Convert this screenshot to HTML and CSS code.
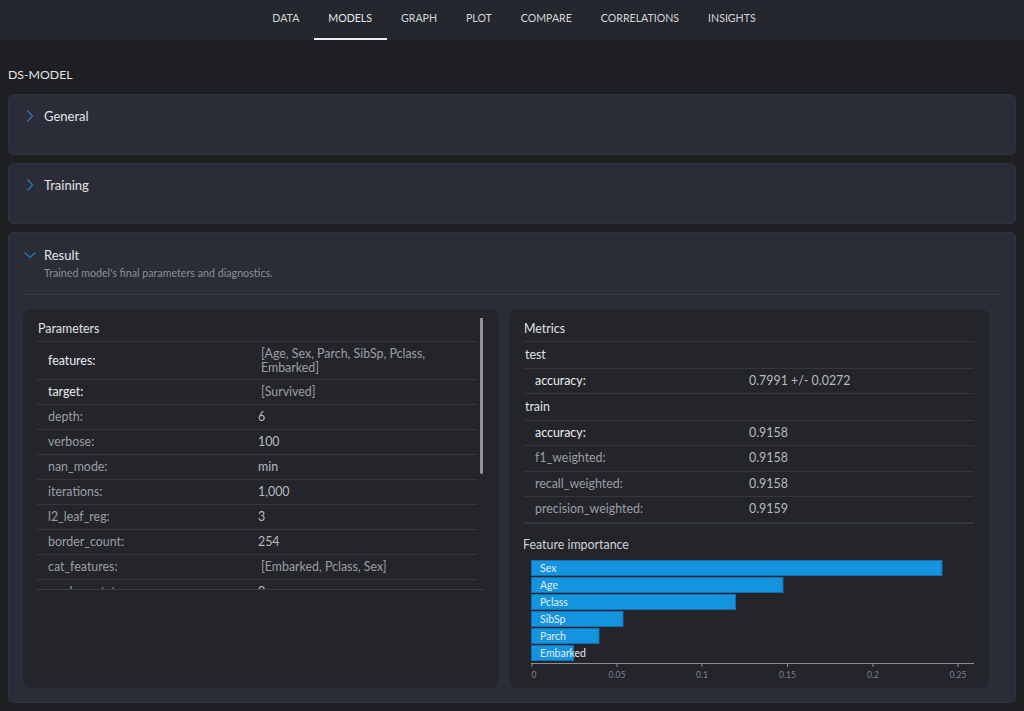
FILE: index.html
```html
<!DOCTYPE html>
<html>
<head>
<meta charset="utf-8">
<title>DS-MODEL</title>
<link rel="stylesheet" href="styles.css">
</head>
<body>
<nav class="topnav">
  <a class="tab">DATA</a>
  <a class="tab active">MODELS</a>
  <a class="tab">GRAPH</a>
  <a class="tab">PLOT</a>
  <a class="tab">COMPARE</a>
  <a class="tab">CORRELATIONS</a>
  <a class="tab">INSIGHTS</a>
</nav>
<main class="page">
  <h1 class="page-title">DS-MODEL</h1>

  <section class="card collapsed">
    <div class="card-head">
      <svg class="chev" width="12" height="12" viewBox="0 0 12 12"><path d="M3.5 0.5 L8.5 6 L3.5 11.5" fill="none" stroke="#2a79b8" stroke-width="1.2"/></svg>
      <span class="card-title">General</span>
    </div>
  </section>

  <section class="card collapsed">
    <div class="card-head">
      <svg class="chev" width="12" height="12" viewBox="0 0 12 12"><path d="M3.5 0.5 L8.5 6 L3.5 11.5" fill="none" stroke="#2a79b8" stroke-width="1.2"/></svg>
      <span class="card-title">Training</span>
    </div>
  </section>

  <section class="card open">
    <div class="card-head">
      <svg class="chev" width="12" height="12" viewBox="0 0 12 12"><path d="M0.5 3.5 L6 8.5 L11.5 3.5" fill="none" stroke="#2a79b8" stroke-width="1.2"/></svg>
      <span class="card-title">Result</span>
    </div>
    <p class="card-sub">Trained model's final parameters and diagnostics.</p>
    <div class="divider"></div>
    <div class="panels">
      <div class="panel">
        <div class="scroll">
          <div class="panel-title">Parameters</div>
          <table class="kv params">
            <tr class="hi first"><td class="k">features:</td><td class="v list">[Age, Sex, Parch, SibSp, Pclass, Embarked]</td></tr>
            <tr class="hi"><td class="k">target:</td><td class="v list">[Survived]</td></tr>
            <tr><td class="k">depth:</td><td class="v">6</td></tr>
            <tr><td class="k">verbose:</td><td class="v">100</td></tr>
            <tr><td class="k">nan_mode:</td><td class="v">min</td></tr>
            <tr><td class="k">iterations:</td><td class="v">1,000</td></tr>
            <tr><td class="k">l2_leaf_reg:</td><td class="v">3</td></tr>
            <tr><td class="k">border_count:</td><td class="v">254</td></tr>
            <tr><td class="k">cat_features:</td><td class="v list">[Embarked, Pclass, Sex]</td></tr>
            <tr><td class="k">random_state:</td><td class="v">0</td></tr>
          </table>
          <div class="thumb"></div>
        </div>
      </div>

      <div class="panel metrics">
        <div class="panel-title">Metrics</div>
        <table class="kv mtable">
          <tr class="grp"><td colspan="2">test</td></tr>
          <tr class="hi"><td class="k">accuracy:</td><td class="v">0.7991 +/- 0.0272</td></tr>
          <tr class="grp"><td colspan="2">train</td></tr>
          <tr class="hi"><td class="k">accuracy:</td><td class="v">0.9158</td></tr>
          <tr><td class="k">f1_weighted:</td><td class="v">0.9158</td></tr>
          <tr><td class="k">recall_weighted:</td><td class="v">0.9158</td></tr>
          <tr class="last"><td class="k">precision_weighted:</td><td class="v">0.9159</td></tr>
        </table>
        <div class="fi-title">Feature importance</div>
        <svg class="chart" width="450" height="128" viewBox="0 0 450 128">
          <g class="bars">
            <rect x="7.5" y="6.5" width="410.5" height="15"/>
            <rect x="7.5" y="23.5" width="251.5" height="15"/>
            <rect x="7.5" y="40.5" width="204" height="15"/>
            <rect x="7.5" y="57.5" width="91.5" height="15"/>
            <rect x="7.5" y="74.5" width="67.5" height="15"/>
            <rect x="7.5" y="91.5" width="42" height="15"/>
          </g>
          <g class="blabels">
            <text x="16" y="17.5">Sex</text>
            <text x="16" y="34.5">Age</text>
            <text x="16" y="51.5">Pclass</text>
            <text x="16" y="68.5">SibSp</text>
            <text x="16" y="85.5">Parch</text>
            <text x="16" y="102.5">Embarked</text>
          </g>
          <g class="axis">
            <line x1="7" y1="109.5" x2="450" y2="109.5"/>
            <line x1="8" y1="109.5" x2="8" y2="113"/>
            <line x1="93" y1="109.5" x2="93" y2="113"/>
            <line x1="178" y1="109.5" x2="178" y2="113"/>
            <line x1="263.5" y1="109.5" x2="263.5" y2="113"/>
            <line x1="349" y1="109.5" x2="349" y2="113"/>
            <line x1="434" y1="109.5" x2="434" y2="113"/>
          </g>
          <g class="ticks">
            <text x="10" y="124">0</text>
            <text x="93" y="124">0.05</text>
            <text x="178" y="124">0.1</text>
            <text x="263.5" y="124">0.15</text>
            <text x="349" y="124">0.2</text>
            <text x="434" y="124">0.25</text>
          </g>
        </svg>
      </div>
    </div>
  </section>
</main>
</body>
</html>
```

FILE: styles.css
```css
* { box-sizing: border-box; }
html, body {
  margin: 0;
  padding: 0;
  background: #1e1f23;
  color: #d6d7da;
  font-family: Lato, "Open Sans", "Liberation Sans", sans-serif;
  height: 711px;
  overflow: hidden;
}

.topnav {
  height: 40px;
  background: #24272e;
  display: flex;
  justify-content: center;
  align-items: stretch;
  padding-left: 4px;
}
.tab {
  display: flex;
  align-items: center;
  padding: 0 14.5px 2px;
  font-size: 10.6px;
  color: #d4d5d8;
  border-bottom: 2px solid transparent;
  cursor: pointer;
}
.tab.active {
  color: #e8e9eb;
  border-bottom-color: #eeeeee;
}

.page { padding: 0 8px; }
.page-title {
  margin: 27px 0 11px;
  font-size: 12.3px;
  line-height: 16px;
  font-weight: 400;
  color: #e2e3e5;
}

.card {
  background: #2a2d37;
  border: 1px solid #30333d;
  border-radius: 6px;
  padding: 0 15px;
  margin-bottom: 8px;
}
.card.collapsed { height: 61px; }
.card-head {
  display: flex;
  align-items: center;
  gap: 8px;
  padding-top: 13px;
  height: 29px;
}
.open .card-head { padding-top: 14px; height: 30px; }
.chev { display: block; flex: none; }
.card-title {
  font-size: 13px;
  line-height: 16px;
  color: #e4e5e8;
}
.card-sub {
  margin: 3px 0 0 20px;
  font-size: 10.7px;
  line-height: 13px;
  color: #8b8e96;
}
.divider {
  height: 1px;
  background: #363945;
  margin-top: 15px;
}
.panels {
  display: grid;
  grid-template-columns: 475px 479px;
  gap: 12px;
  margin: 14px 0 14px -1px;
}
.panel {
  background: #23252b;
  border-radius: 8px;
  padding: 9px 14px 6px;
}
.metrics { padding: 9px 15px 6px 14px; }

.scroll {
  position: relative;
  height: 272px;
  overflow: hidden;
  border-bottom: 1px solid #3a3d45;
}
.thumb {
  position: absolute;
  left: 443px;
  top: -1px;
  width: 3px;
  height: 157px;
  background: #8e9198;
  border-radius: 2px;
}
.panel-title {
  width: 440px;
  font-size: 12.4px;
  line-height: 14px;
  padding: 4px 1px 5px;
  color: #e0e1e4;
  border-bottom: 1px solid #34373f;
}
.metrics .panel-title { width: 450px; padding-left: 0; }

.kv {
  border-collapse: collapse;
  font-size: 12.4px;
  line-height: 14px;
}
.params { width: 440px; }
.kv td {
  padding: 5px 0;
  border-bottom: 1px solid #34373f;
  vertical-align: middle;
}
.kv .k {
  padding-left: 11px;
  color: #9c9ea4;
}
.params .k { width: 221px; }
.kv .v { color: #b9babe; }
.kv .v.list { padding-left: 3px; color: #9c9ea4; }
.params tr.first td { padding: 5px 0 4px; }
.params tr.first .k { padding-left: 11px; }
.params tr.first .v { padding-left: 3px; }
.kv tr.hi .k { color: #ececee; }

.mtable { width: 450px; line-height: 14.5px; }
.mtable .k { width: 225px; }
.mtable .grp td { padding: 6px 0 5px 1px; color: #e2e3e6; }
.mtable tr.last td { border-bottom: 2px solid #34373f; }

.fi-title {
  margin-top: 13px;
  font-size: 12.4px;
  line-height: 16px;
  color: #d2d3d6;
  margin-left: -1px;
}
.chart { display: block; margin-top: 1px; }
.bars rect { fill: #1494df; stroke: #1270b0; stroke-width: 1; }
.blabels text {
  font-family: Lato, "Open Sans", sans-serif;
  font-size: 10.5px;
  fill: #e4edf5;
}
.axis line { stroke: #8b8e95; stroke-width: 1; }
.ticks text {
  font-family: Lato, "Open Sans", sans-serif;
  font-size: 8.5px;
  fill: #7e818a;
  text-anchor: middle;
}
```
